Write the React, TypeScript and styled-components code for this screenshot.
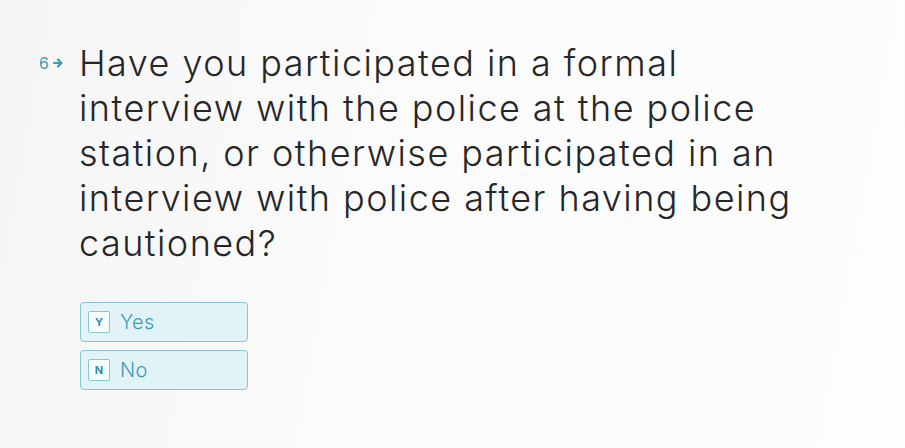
import styled, { createGlobalStyle } from "styled-components";

const GlobalStyle = createGlobalStyle`
  html, body {
    margin: 0;
    padding: 0;
  }
  body {
    background: linear-gradient(100deg, #f5f5f5 0%, #fbfbfb 45%, #fdfdfd 100%);
    font-family: Inter, "Noto Sans", sans-serif;
    min-height: 448px;
  }
`;

const Page = styled.div`
  width: 905px;
  height: 448px;
  padding: 41px 0 0 39px;
  box-sizing: border-box;
`;

const Question = styled.div`
  display: flex;
  align-items: flex-start;
`;

const Counter = styled.div`
  width: 40px;
  flex: none;
  display: flex;
  align-items: center;
  gap: 4px;
  margin-top: 14px;
  color: #3a9db4;
  font-size: 16px;
  line-height: 16px;
`;

const Arrow = styled.svg`
  width: 10px;
  height: 10px;
`;

const Body = styled.div`
  display: flex;
  flex-direction: column;
`;

const Title = styled.h1`
  margin: 0;
  font-size: 36px;
  line-height: 45px;
  font-weight: 300;
  color: #262627;
  letter-spacing: 1.45px;
`;

const Choices = styled.div`
  display: flex;
  flex-direction: column;
  gap: 8px;
  margin: 36px 0 0 1px;
`;

const Choice = styled.button`
  width: 168px;
  height: 40px;
  box-sizing: border-box;
  display: flex;
  align-items: center;
  gap: 10px;
  padding: 0 0 0 7px;
  background: #e2f3f8;
  border: 1px solid #86c7d6;
  border-radius: 4px;
  font-family: inherit;
  cursor: pointer;
`;

const Key = styled.span`
  width: 22px;
  height: 22px;
  box-sizing: border-box;
  display: flex;
  align-items: center;
  justify-content: center;
  background: #f7fcfd;
  border: 1px solid #86c7d6;
  border-radius: 2px;
  color: #2f8fa8;
  font-size: 11px;
  font-weight: 700;
`;

const Label = styled.span`
  color: #3a9db4;
  font-size: 20px;
  font-weight: 300;
  letter-spacing: 0.3px;
`;

const options = [
  { key: "Y", label: "Yes" },
  { key: "N", label: "No" },
];

export default function App() {
  return (
    <>
      <GlobalStyle />
      <Page>
        <Question>
          <Counter>
            6
            <Arrow viewBox="0 0 10 10">
              <path
                d="M1 5h7M5 1.6 8.4 5 5 8.4"
                stroke="currentColor"
                strokeWidth="2.2"
                fill="none"
                strokeLinecap="round"
                strokeLinejoin="round"
              />
            </Arrow>
          </Counter>
          <Body>
            <Title>
              Have you participated in a formal
              <br />
              interview with the police at the police
              <br />
              station, or otherwise participated in an
              <br />
              interview with police after having being
              <br />
              cautioned?
            </Title>
            <Choices>
              {options.map((o) => (
                <Choice key={o.key}>
                  <Key>{o.key}</Key>
                  <Label>{o.label}</Label>
                </Choice>
              ))}
            </Choices>
          </Body>
        </Question>
      </Page>
    </>
  );
}
